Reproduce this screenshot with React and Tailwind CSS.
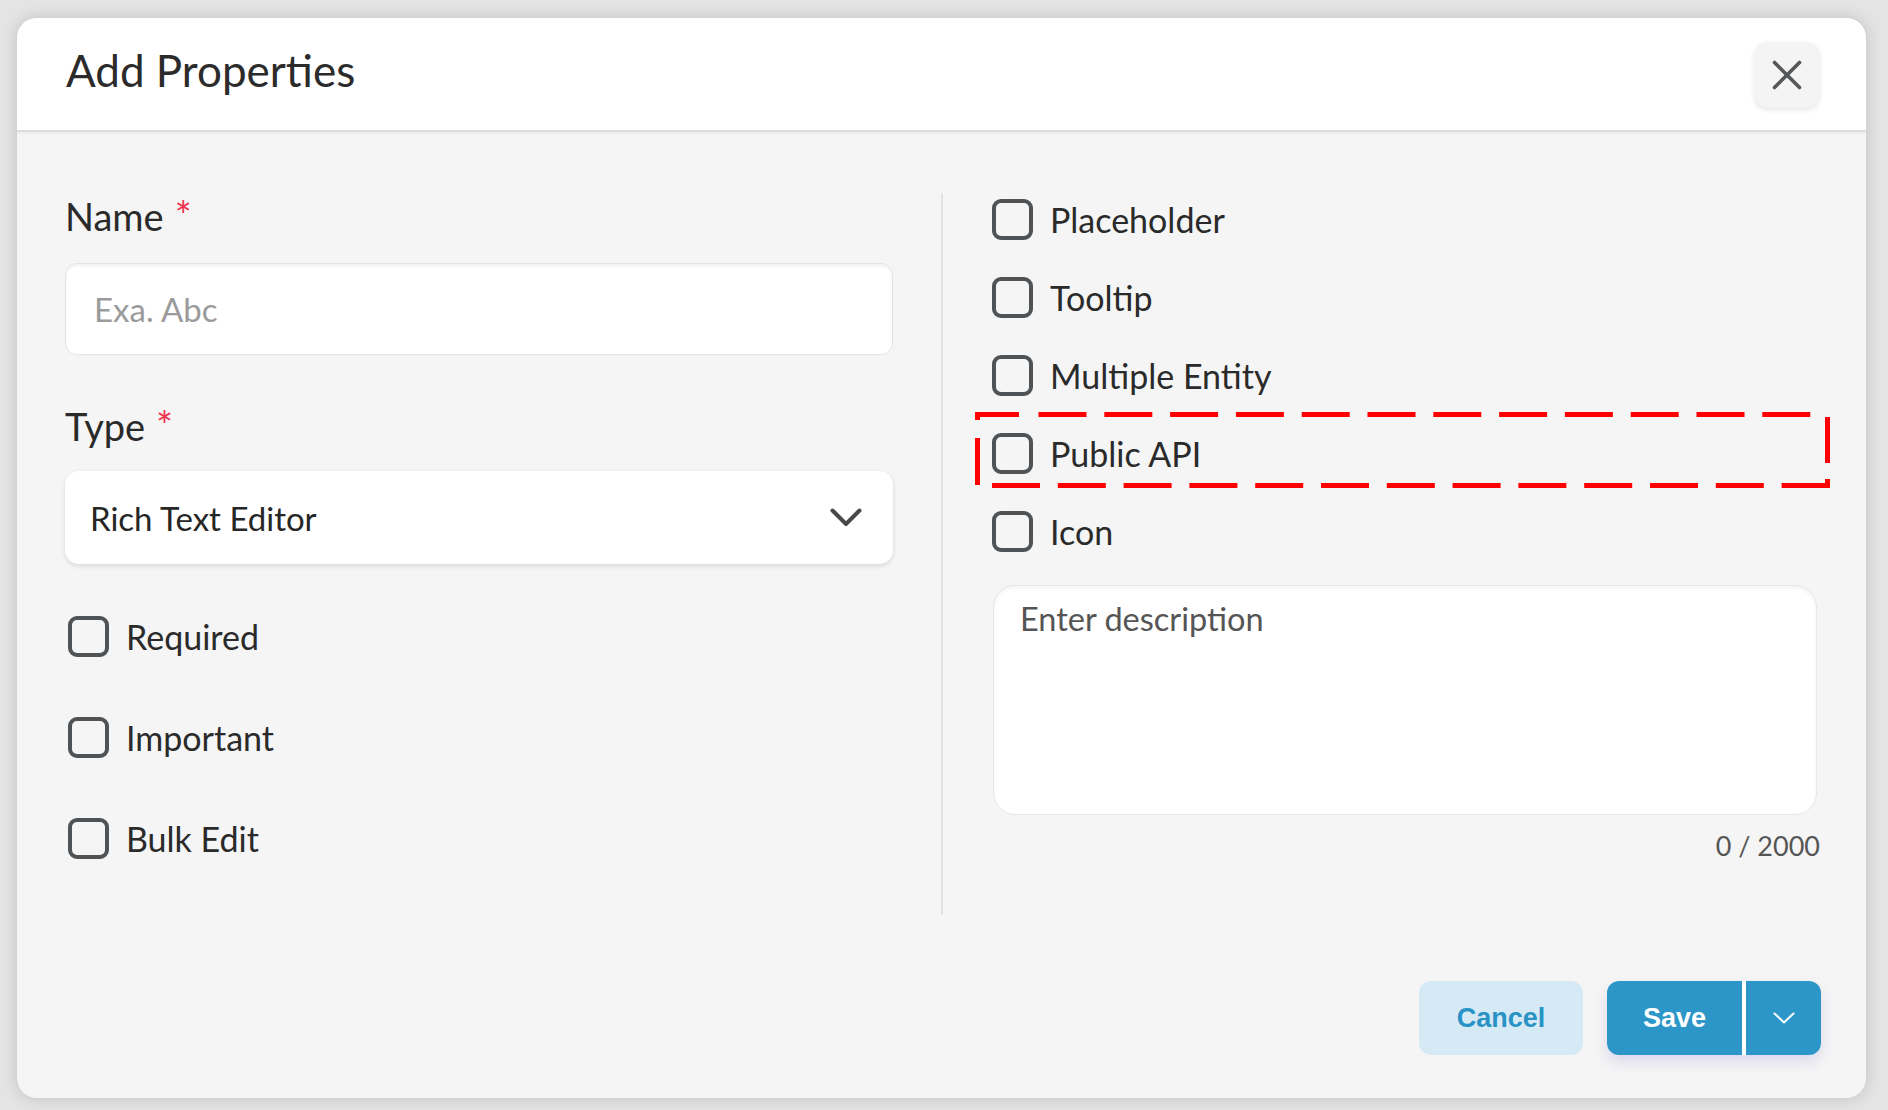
import React from "react";

function Checkbox({ label, className = "" }) {
  return (
    <div className={"flex items-center h-[41px] " + className}>
      <span className="w-[41px] h-[41px] shrink-0 rounded-[9px] border-[4px] border-[#4f5356] bg-transparent" />
      <span className="ml-[17px] text-[34px] leading-[40px] text-[#2a2a2a] whitespace-nowrap">{label}</span>
    </div>
  );
}

function DashedBox() {
  const top = Array.from({ length: 12 }, (_, i) => 63.5 + i * 65.8);
  const bottom = Array.from({ length: 13 }, (_, i) => 17 + i * 65.8);
  return (
    <svg
      className="absolute left-[975px] top-[412px] pointer-events-none"
      width="856"
      height="77"
      viewBox="0 0 856 77"
    >
      <rect x="0" y="0" width="44" height="5" fill="#ff0000" />
      {top.map((x, i) => (
        <rect key={"t" + i} x={x} y="0" width="48" height="5" fill="#ff0000" />
      ))}
      <rect x="0" y="0" width="5" height="8" fill="#ff0000" />
      <rect x="0" y="26" width="5" height="47" fill="#ff0000" />
      <rect x="850" y="5" width="5" height="46" fill="#ff0000" />
      {bottom.map((x, i) => (
        <rect key={"b" + i} x={x} y="71" width="48" height="5" fill="#ff0000" />
      ))}
      <rect x="850" y="67" width="5" height="9" fill="#ff0000" />
    </svg>
  );
}

export default function App() {
  return (
    <div className="relative w-[1888px] h-[1110px] overflow-hidden bg-[#e4e4e4] pt-[18px] pl-[17px] font-['Lato',sans-serif]">
      <div className="w-[1849px] h-[1080px] rounded-[20px] bg-[#f5f5f5] overflow-hidden flex flex-col shadow-[0_0_16px_rgba(0,0,0,0.16)]">
        {/* Header */}
        <div className="h-[114px] shrink-0 bg-white border-b-2 border-[#dcdcdc] shadow-[0_1px_3px_rgba(0,0,0,0.06)] flex items-center justify-between pl-[49px] pr-[46px]">
          <h1 className="text-[44px] leading-[52px] text-[#2b2b2b] mb-[8px]">Add Properties</h1>
          <button className="w-[66px] h-[66px] rounded-[14px] bg-[#f4f4f4] shadow-[0_2px_5px_rgba(0,0,0,0.1)] flex items-center justify-center mt-[2px]">
            <svg width="30" height="30" viewBox="0 0 30 30" fill="none">
              <path d="M2.5 2.5L27.5 27.5M27.5 2.5L2.5 27.5" stroke="#555759" strokeWidth="3.6" strokeLinecap="round" />
            </svg>
          </button>
        </div>

        {/* Body */}
        <div className="flex h-[783px] shrink-0">
          {/* Left column */}
          <div className="w-[828px] ml-[48px] pt-[62px] flex flex-col">
            <div className="flex text-[38px] leading-[44px] text-[#2a2a2a]">
              <span>Name</span>
              <span className="ml-[11px] text-[#f2334f] text-[40px]">*</span>
            </div>
            <input
              className="mt-[25px] h-[92px] w-full rounded-[12px] bg-white border border-[#e4e4e4] shadow-[inset_0_2px_3px_rgba(0,0,0,0.06)] pl-[28px] text-[33px] text-[#2e2e2e] placeholder:text-[#9b9b9b] outline-none"
              placeholder="Exa. Abc"
            />
            <div className="mt-[49px] flex text-[38px] leading-[44px] text-[#2a2a2a]">
              <span>Type</span>
              <span className="ml-[11px] text-[#f2334f] text-[40px]">*</span>
            </div>
            <div className="mt-[23px] h-[93px] w-full rounded-[14px] bg-white shadow-[0_2px_5px_rgba(0,0,0,0.12)] flex items-center justify-between pl-[25px] pr-[31px]">
              <span className="text-[33px] leading-[40px] text-[#262626]">Rich Text Editor</span>
              <svg width="32" height="19" viewBox="0 0 32 19" fill="none">
                <path d="M2.5 2.5L16 16L29.5 2.5" stroke="#48494b" strokeWidth="4" strokeLinecap="round" strokeLinejoin="round" />
              </svg>
            </div>
            <div className="mt-[52px] flex flex-col gap-[60px] ml-[3px]">
              <Checkbox label="Required" />
              <Checkbox label="Important" />
              <Checkbox label="Bulk Edit" />
            </div>
          </div>

          {/* Divider */}
          <div className="ml-[48px] mt-[61px] w-[2px] h-[722px] bg-[#e3e3e3]" />

          {/* Right column */}
          <div className="ml-[49px] w-[828px] pt-[67px] flex flex-col">
            <div className="flex flex-col gap-[37px]">
              <Checkbox label="Placeholder" />
              <Checkbox label="Tooltip" />
              <Checkbox label="Multiple Entity" />
              <Checkbox label="Public API" />
              <Checkbox label="Icon" />
            </div>
            <textarea
              className="mt-[33px] ml-[1px] w-[824px] h-[230px] resize-none rounded-[22px] bg-white border border-[#e6e6e6] shadow-[inset_0_2px_4px_rgba(0,0,0,0.05)] pt-[14px] pl-[26px] text-[32.5px] leading-[38px] text-[#2e2e2e] placeholder:text-[#555] outline-none"
              placeholder="Enter description"
            />
            <div className="mt-[15px] text-right text-[27px] leading-[32px] text-[#555]">0 / 2000</div>
          </div>
        </div>

        {/* Footer */}
        <div className="mt-[66px] h-[74px] shrink-0 flex justify-end gap-[24px] pr-[45px] font-['Liberation_Sans',Arial,sans-serif]">
          <button className="w-[164px] h-[74px] rounded-[12px] bg-[#d6eaf6] text-[#2a93c6] font-bold text-[27px]">
            Cancel
          </button>
          <div className="flex h-[74px] rounded-[12px] overflow-hidden shadow-[0_7px_14px_rgba(110,90,200,0.18)]">
            <button className="w-[135px] h-full bg-[#2c96c8] text-white font-bold text-[27px]">Save</button>
            <div className="w-[4px] h-full bg-white" />
            <button className="w-[75px] h-full bg-[#2c96c8] flex items-center justify-center">
              <svg width="22" height="12" viewBox="0 0 22 12" fill="none">
                <path d="M1.5 1.5L11 10.5L20.5 1.5" stroke="#ffffff" strokeWidth="2" strokeLinecap="round" strokeLinejoin="round" />
              </svg>
            </button>
          </div>
        </div>
      </div>

      <DashedBox />
    </div>
  );
}
